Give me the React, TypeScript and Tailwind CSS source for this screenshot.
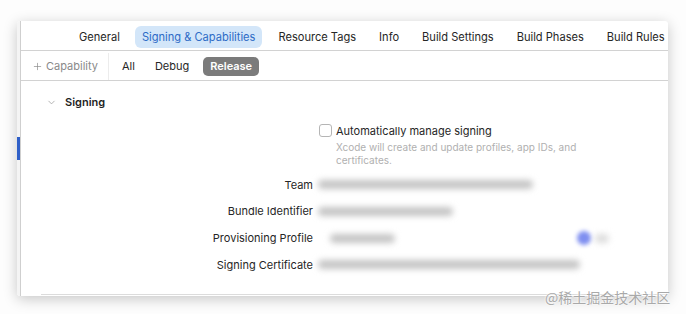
import { ChevronDown, Plus } from "lucide-react";

const tabs = ["General", "Signing & Capabilities", "Resource Tags", "Info", "Build Settings", "Build Phases", "Build Rules"];

function Blur({ w, className = "" }: { w: number; className?: string }) {
  return (
    <div
      className={"h-[9px] rounded-full bg-[#c4c4c4] blur-[3px] " + className}
      style={{ width: w }}
    />
  );
}

function Row({ label, children }: { label: string; children: React.ReactNode }) {
  return (
    <div className="flex h-[26.7px] items-center">
      <div className="w-[297px] pr-[5px] text-right text-[#262626]">{label}</div>
      <div className="flex flex-1 items-center">{children}</div>
    </div>
  );
}

export default function App() {
  return (
    <div
      className="relative h-[314px] w-[686px] overflow-hidden bg-[#fdfdfd] pl-[17px] pt-[21px] text-[11px]"
      style={{ fontFamily: "Inter, 'Noto Sans', sans-serif" }}
    >
      <div className="flex h-[275px] w-[651px] overflow-hidden rounded-[3px] bg-white shadow-[0_3px_14px_rgba(0,0,0,0.22)]">
        {/* sidebar sliver */}
        <div className="flex w-[3px] flex-col bg-[#f4f4f4]">
          <div className="mt-[116px] h-[23px] bg-[#2f5fc8]" />
        </div>
        <div className="flex min-w-0 flex-1 flex-col border-l border-[#cfcfcf]">
          {/* tab bar */}
          <div className="flex h-[30px] shrink-0 items-center whitespace-nowrap border-b border-[#d2d2d2] pl-[58px] pt-[3px] text-[11.1px] text-[#262626]">
            {tabs.map((t, i) =>
              t === "Signing & Capabilities" ? (
                <div
                  key={t}
                  className="mr-[16px] rounded-[6px] bg-[#d3e6f9] px-[7px] py-[3px] text-[#2e6bc6]"
                >
                  {t}
                </div>
              ) : (
                <div key={t} className={i === 0 ? "mr-[15px]" : "mr-[23px]"}>
                  {t}
                </div>
              )
            )}
          </div>
          {/* filter bar */}
          <div className="flex h-[30px] shrink-0 items-center border-b border-[#d2d2d2] pt-[2px] text-[#262626]">
            <div className="flex h-full items-center gap-[3px] border-r border-[#ececec] pl-[11px] pr-[10px] text-[#8a8a8a]">
              <Plus size={11} strokeWidth={1.5} />
              <span>Capability</span>
            </div>
            <span className="ml-[13px]">All</span>
            <span className="ml-[20px]">Debug</span>
            <span className="ml-[14px] rounded-[5px] bg-[#7b7b7b] px-[7px] py-[1px] font-semibold text-white">
              Release
            </span>
          </div>
          {/* content */}
          <div className="flex flex-1 flex-col">
            <div className="flex h-[40px] items-center pl-[25px] pt-[2px]">
              <ChevronDown size={11} strokeWidth={1.6} className="text-[#9a9a9a]" />
              <span className="ml-[8px] font-semibold text-[#1f1f1f]">Signing</span>
            </div>
            <div className="flex pl-[298px] pt-[2px]">
              <div className="mt-[1px] h-[13px] w-[13px] rounded-[3px] border border-[#b5b5b5] bg-white" />
              <div className="ml-[4px]">
                <div className="text-[#262626]">Automatically manage signing</div>
                <div className="mt-[1px] w-[260px] text-[10px] leading-[13px] text-[#b0b0b0]">
                  Xcode will create and update profiles, app IDs, and certificates.
                </div>
              </div>
            </div>
            <div className="mt-[5px] flex flex-col">
              <Row label="Team">
                <Blur w={215} />
              </Row>
              <Row label="Bundle Identifier">
                <Blur w={135} />
              </Row>
              <Row label="Provisioning Profile">
                <Blur w={65} className="ml-[12px]" />
                <div className="ml-[182px] h-[14px] w-[14px] rounded-full bg-[#7f8ff0] blur-[2px]" />
                <Blur w={14} className="ml-[4px] bg-[#dcdcdc]" />
              </Row>
              <Row label="Signing Certificate">
                <Blur w={262} />
              </Row>
            </div>
            <div className="mt-auto mb-[1px] ml-[20px] border-b border-[#dcdcdc]" />
          </div>
        </div>
      </div>
      <div
        className="absolute left-[545px] top-[287px] text-[14px] text-[#a9a9a9]"
        style={{ fontFamily: "'Noto Sans CJK SC', sans-serif", textShadow: "0 0 2px #fff, 0 0 2px #fff" }}
      >
        @稀土掘金技术社区
      </div>
    </div>
  );
}
